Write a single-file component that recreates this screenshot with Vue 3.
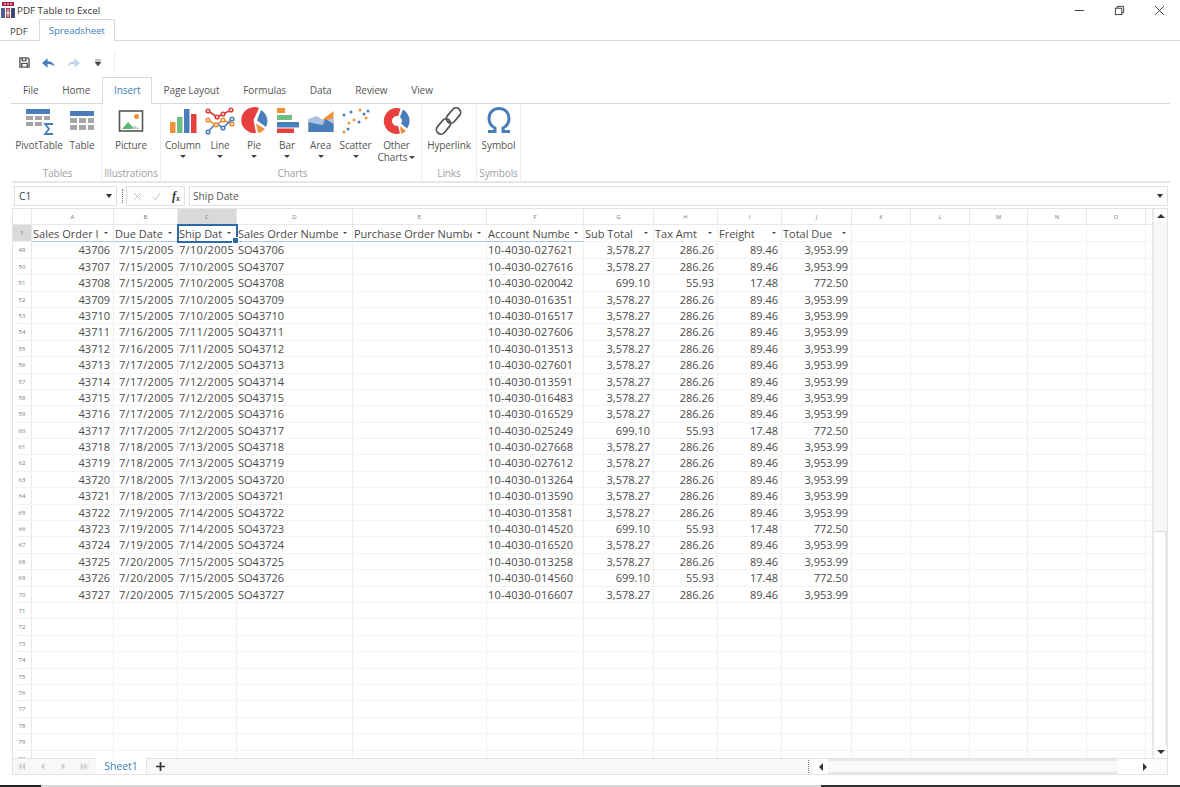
<template>
  <div class="app">
    <!-- barra de titulo -->
    <header class="titlebar">
      <svg class="app-icon" viewBox="0 0 14 16">
        <rect x="1" y="0" width="12" height="4" fill="#a3203f" />
        <path d="M3 2h2M6 2h2M9 2h2" stroke="#fff" stroke-width="1" />
        <rect x="0" y="6" width="4" height="10" fill="#4b5f8c" />
        <rect x="5" y="6" width="4" height="10" fill="#a8404f" />
        <rect x="10" y="6" width="4" height="10" fill="#3d4a6b" />
        <path d="M5 11h4M7 7v8" stroke="#fff" stroke-width="1" />
      </svg>
      <span class="app-name">PDF Table to Excel</span>
      <div class="win-buttons">
        <svg viewBox="0 0 12 12"><path d="M1 6h10" stroke="#333" stroke-width="1" /></svg>
        <svg viewBox="0 0 12 12" fill="none" stroke="#333"><rect x="1.5" y="3.5" width="7" height="7" /><path d="M3.5 3.5v-2h7v7h-2" /></svg>
        <svg viewBox="0 0 12 12"><path d="M1 1l10 10M11 1L1 11" stroke="#333" stroke-width="1" /></svg>
      </div>
    </header>

    <nav class="doc-tabs">
      <span class="doc-tab">PDF</span>
      <span class="doc-tab activo">Spreadsheet</span>
    </nav>

    <!-- barra de acceso rapido -->
    <div class="qat">
      <div class="qat-items">
        <svg viewBox="0 0 12 12" class="qat-icon" fill="none" stroke="#555" stroke-width="1.5">
          <path d="M1 1h8.500L11 2.500V11H1z" />
          <path d="M3.500 1v3h4V1M3 11V7h6v4" />
        </svg>
        <svg viewBox="0 0 14 10" class="qat-arrow"><path d="M0 5L6 0v3c4 0 7 2 8 6-2-2-4-3-8-3v4z" fill="#4a7ebb" /></svg>
        <svg viewBox="0 0 14 10" class="qat-arrow"><path d="M14 5L8 0v3C4 3 1 5 0 9c2-2 4-3 8-3v4z" fill="#c3d5ea" /></svg>
        <svg viewBox="0 0 8 8" class="qat-more"><path d="M1 1h6M1 3h6L4 7z" fill="#444" stroke="#444" stroke-width=".6" /></svg>
      </div>
    </div>

    <nav class="ribbon-tabs">
      <span
        v-for="t in ribbonTabs"
        :key="t"
        class="ribbon-tab"
        :class="{ activo: t === 'Insert' }"
      >{{ t }}</span>
    </nav>

    <!-- cinta -->
    <section class="ribbon">
      <div class="group g-tables">
        <div class="group-items">
          <div class="rb w50">
            <svg viewBox="0 0 30 30" class="ico">
              <rect x="2" y="3" width="24" height="5" fill="#4a7ebb" />
              <path d="M2 10h7v4H2zM11 10h7v4h-7zM20 10h6v4h-6zM2 16h7v4H2zM11 16h7v4h-7z" fill="#a6a6a6" />
              <path d="M29 18h-8l4 5-4 5h8" fill="none" stroke="#4a7ebb" stroke-width="1.8" />
            </svg>
            <span>PivotTable</span>
          </div>
          <div class="rb w36">
            <svg viewBox="0 0 30 30" class="ico">
              <rect x="3" y="5" width="24" height="5" fill="#4a7ebb" />
              <path d="M3 12h7v5H3zM12 12h7v5h-7zM21 12h6v5h-6zM3 19h7v5H3zM12 19h7v5h-7zM21 19h6v5h-6z" fill="#a6a6a6" />
            </svg>
            <span>Table</span>
          </div>
        </div>
        <div class="group-name">Tables</div>
      </div>

      <div class="group g-illus">
        <div class="group-items">
          <div class="rb w58">
            <svg viewBox="0 0 30 30" class="ico">
              <rect x="3.500" y="5" width="23" height="20" fill="#fff" stroke="#555" stroke-width="1.6" />
              <path d="M6 23l6-7 5 5 2-1 4 3z" fill="#5cb878" />
              <path d="M15 23l4-3 4 3z" fill="#b7dcc2" />
              <circle cx="20.500" cy="10.500" r="2.500" fill="#f0913a" />
            </svg>
            <span>Picture</span>
          </div>
        </div>
        <div class="group-name">Illustrations</div>
      </div>

      <div class="group g-charts">
        <div class="group-items">
          <div class="rb w38">
            <svg viewBox="0 0 30 30" class="ico">
              <rect x="2" y="16" width="5.500" height="11" fill="#f0913a" />
              <rect x="9" y="11" width="5.500" height="16" fill="#6fbf85" />
              <rect x="16" y="3" width="5.500" height="24" fill="#4a7ebb" />
              <rect x="23" y="8" width="5.500" height="19" fill="#e8403f" />
            </svg>
            <span>Column</span><i class="caret"></i>
          </div>
          <div class="rb w36">
            <svg viewBox="0 0 30 30" class="ico" fill="none" stroke-width="1.6">
              <path d="M3 5l9 6 6-3 8-4" stroke="#d9413f" />
              <path d="M3 14l8 5 7-5 9 4" stroke="#f0913a" />
              <path d="M3 26l8-9 7 5 9-9" stroke="#4a7ebb" />
              <g fill="#fff">
                <circle cx="3" cy="5" r="1.8" stroke="#d9413f" /><circle cx="12" cy="11" r="1.8" stroke="#d9413f" /><circle cx="18" cy="8" r="1.8" stroke="#d9413f" /><circle cx="26" cy="4" r="1.8" stroke="#d9413f" />
                <circle cx="3" cy="14" r="1.8" stroke="#f0913a" /><circle cx="11" cy="19" r="1.8" stroke="#f0913a" /><circle cx="18" cy="14" r="1.8" stroke="#f0913a" /><circle cx="27" cy="18" r="1.8" stroke="#f0913a" />
                <circle cx="3" cy="26" r="1.8" stroke="#4a7ebb" /><circle cx="18" cy="22" r="1.8" stroke="#4a7ebb" /><circle cx="27" cy="13" r="1.8" stroke="#4a7ebb" />
              </g>
            </svg>
            <span>Line</span><i class="caret"></i>
          </div>
          <div class="rb w32">
            <svg viewBox="0 0 30 30" class="ico">
              <path d="M20 2A13 13 0 1 0 17 27L14.500 14z" fill="#e8403f" />
              <path d="M22 4A13 13 0 0 1 27 21L18 14.500z" fill="#4a7ebb" />
              <path d="M17 17.500L26 23A13 13 0 0 1 19 27z" fill="#f0913a" />
            </svg>
            <span>Pie</span><i class="caret"></i>
          </div>
          <div class="rb w34">
            <svg viewBox="0 0 30 30" class="ico">
              <rect x="5" y="2" width="8" height="5" fill="#f0913a" />
              <rect x="5" y="9" width="15" height="5" fill="#6fbf85" />
              <rect x="5" y="16" width="22" height="5.500" fill="#4a7ebb" />
              <rect x="5" y="22.500" width="17" height="4.500" fill="#e8403f" />
            </svg>
            <span>Bar</span><i class="caret"></i>
          </div>
          <div class="rb w33">
            <svg viewBox="0 0 30 30" class="ico">
              <path d="M2.500 13l8 6 8-7 9-7v21h-25z" fill="#f0913a" />
              <path d="M2.500 13l8-3 8 5 9-3v14h-25z" fill="#a9c3e3" />
              <path d="M2.500 16l8 2 6 1 3-6 8 5v8h-25z" fill="#4a7ebb" />
            </svg>
            <span>Area</span><i class="caret"></i>
          </div>
          <div class="rb w37">
            <svg viewBox="0 0 30 30" class="ico">
              <g fill="#f0913a">
                <circle cx="3" cy="26" r="1.500" /><circle cx="8" cy="17" r="1.500" /><circle cx="13" cy="14" r="1.500" /><circle cx="19" cy="4" r="1.500" /><circle cx="25" cy="12" r="1.500" />
              </g>
              <g fill="#4a7ebb">
                <circle cx="3" cy="9" r="1.500" /><circle cx="7" cy="23" r="1.500" /><circle cx="10" cy="6" r="1.500" /><circle cx="18" cy="16" r="1.500" /><circle cx="23" cy="8" r="1.500" /><circle cx="27" cy="5" r="1.500" />
              </g>
            </svg>
            <span>Scatter</span><i class="caret"></i>
          </div>
          <div class="rb w45">
            <svg viewBox="0 0 30 30" class="ico">
              <path d="M15 2a13 13 0 1 0 3 25.600l-2-7.800a5 5 0 1 1 .3-9.700l2.300-7.600A13 13 0 0 0 15 2z" fill="#e8403f" />
              <path d="M21 3.500a13 13 0 0 1 4 19l-6-5a5 5 0 0 0-1-6.500z" fill="#4a7ebb" />
              <path d="M18 20l6 5a13 13 0 0 1-5 2.700z" fill="#f0913a" />
            </svg>
            <span>Other</span>
            <span class="linea2">Charts<i class="caret-in"></i></span>
          </div>
        </div>
        <div class="group-name">Charts</div>
      </div>

      <div class="group g-links">
        <div class="group-items">
          <div class="rb w54">
            <svg viewBox="0 0 30 30" class="ico" fill="none" stroke="#555" stroke-width="1.8">
              <rect x="15" y="1" width="9" height="17" rx="4.500" transform="rotate(40 19.500 9.500)" />
              <rect x="5" y="12" width="9" height="17" rx="4.500" transform="rotate(40 9.500 20.500)" />
            </svg>
            <span>Hyperlink</span>
          </div>
        </div>
        <div class="group-name">Links</div>
      </div>

      <div class="group g-symbols">
        <div class="group-items">
          <div class="rb w44">
            <svg viewBox="0 0 30 30" class="ico" fill="none" stroke="#4a7ebb" stroke-width="3">
              <path d="M4 25.500h7v-3.500C7 20 5 16 5 12.500C5 6 9.500 2.500 15 2.500S25 6 25 12.500C25 16 23 20 19 22v3.500h7" />
            </svg>
            <span>Symbol</span>
          </div>
        </div>
        <div class="group-name">Symbols</div>
      </div>
    </section>

    <!-- barra de formulas -->
    <div class="formula-bar">
      <div class="name-box">
        <span>C1</span>
        <i class="caret dark"></i>
      </div>
      <span class="grip"></span>
      <div class="fx-box">
        <svg viewBox="0 0 10 10" class="fx-ico"><path d="M1.500 1.500l7 7M8.500 1.500l-7 7" stroke="#bbb" stroke-width="1" /></svg>
        <svg viewBox="0 0 10 10" class="fx-ico"><path d="M1 5.500l3 3 5-7" stroke="#bbb" fill="none" stroke-width="1" /></svg>
        <span class="fx">f<sub>x</sub></span>
      </div>
      <div class="formula-input">
        <span>Ship Date</span>
        <i class="caret dark"></i>
      </div>
    </div>

    <!-- hoja -->
    <section class="sheet">
      <div class="sheet-main">
        <div class="grid-wrap">
          <div class="grid">
            <div class="corner"></div>
            <div
              v-for="c in letras"
              :key="c"
              class="col-head"
              :class="{ sel: c === 'C' }"
            >{{ c }}</div>
            <div class="spacer head"></div>

            <template v-for="fila in filas" :key="fila.n">
              <div class="row-head" :class="{ sel: fila.n === 1 }">{{ fila.n }}</div>
              <div
                v-for="(txt, i) in fila.celdas"
                :key="i"
                class="cell"
                :class="claseCelda(fila, i)"
              >
                <span class="txt">{{ txt }}</span>
                <i v-if="fila.n === 1 && i < 10" class="filtro"></i>
              </div>
              <div class="spacer"></div>
            </template>
          </div>
        </div>
        <div class="vscroll">
          <div class="sb-btn"><i class="tri up"></i></div>
          <div class="v-track"><div class="v-thumb"></div></div>
          <div class="sb-btn"><i class="tri down"></i></div>
        </div>
      </div>

      <footer class="sheet-foot">
        <div class="nav-btns">
          <svg viewBox="0 0 10 8"><path d="M1 0v8M5 0v8L2 4zM9 0v8L6 4z" fill="#ccc" stroke="#ccc" stroke-width=".4" /></svg>
          <svg viewBox="0 0 10 8"><path d="M7 0v8L3 4z" fill="#ccc" /></svg>
          <svg viewBox="0 0 10 8"><path d="M3 0v8l4-4z" fill="#ccc" /></svg>
          <svg viewBox="0 0 10 8"><path d="M9 0v8M5 0v8l3-4zM1 0v8l3-4z" fill="#ccc" stroke="#ccc" stroke-width=".4" /></svg>
        </div>
        <div class="sheet-tab">Sheet1</div>
        <div class="add-sheet">
          <svg viewBox="0 0 9 9"><path d="M4.500 0v9M0 4.500h9" stroke="#333" stroke-width="1.700" /></svg>
        </div>
        <span class="grip foot"></span>
        <div class="hscroll">
          <div class="sb-btn h"><i class="tri left"></i></div>
          <div class="h-thumb"></div>
          <div class="h-rest"></div>
          <div class="sb-btn h"><i class="tri right"></i></div>
        </div>
        <div class="foot-corner"></div>
      </footer>
    </section>

    <div class="desktop-line">
      <span class="dl-a"></span><span class="dl-b"></span><span class="dl-c"></span>
    </div>
  </div>
</template>

<script setup>
const ribbonTabs = ["File", "Home", "Insert", "Page Layout", "Formulas", "Data", "Review", "View"];
const letras = "ABCDEFGHIJKLMNO".split("");

const cabecera = [
  "Sales Order I",
  "Due Date",
  "Ship Dat",
  "Sales Order Numbe",
  "Purchase Order Numbe",
  "Account Numbe",
  "Sub Total",
  "Tax Amt",
  "Freight",
  "Total Due",
  "", "", "", "", "",
];

// [id, due, ship, cuenta, tipo de importe]
const datos = [
  [43706, "7/15/2005", "7/10/2005", "027621", 0],
  [43707, "7/15/2005", "7/10/2005", "027616", 0],
  [43708, "7/15/2005", "7/10/2005", "020042", 1],
  [43709, "7/15/2005", "7/10/2005", "016351", 0],
  [43710, "7/15/2005", "7/10/2005", "016517", 0],
  [43711, "7/16/2005", "7/11/2005", "027606", 0],
  [43712, "7/16/2005", "7/11/2005", "013513", 0],
  [43713, "7/17/2005", "7/12/2005", "027601", 0],
  [43714, "7/17/2005", "7/12/2005", "013591", 0],
  [43715, "7/17/2005", "7/12/2005", "016483", 0],
  [43716, "7/17/2005", "7/12/2005", "016529", 0],
  [43717, "7/17/2005", "7/12/2005", "025249", 1],
  [43718, "7/18/2005", "7/13/2005", "027668", 0],
  [43719, "7/18/2005", "7/13/2005", "027612", 0],
  [43720, "7/18/2005", "7/13/2005", "013264", 0],
  [43721, "7/18/2005", "7/13/2005", "013590", 0],
  [43722, "7/19/2005", "7/14/2005", "013581", 0],
  [43723, "7/19/2005", "7/14/2005", "014520", 1],
  [43724, "7/19/2005", "7/14/2005", "016520", 0],
  [43725, "7/20/2005", "7/15/2005", "013258", 0],
  [43726, "7/20/2005", "7/15/2005", "014560", 1],
  [43727, "7/20/2005", "7/15/2005", "016607", 0],
];

const importes = [
  ["3,578.27", "286.26", "89.46", "3,953.99"],
  ["699.10", "55.93", "17.48", "772.50"],
];

const filas = [{ n: 1, celdas: cabecera }];
datos.forEach((d, i) => {
  filas.push({
    n: 49 + i,
    celdas: [
      String(d[0]), d[1], d[2], "SO" + d[0], "", "10-4030-" + d[3],
      ...importes[d[4]],
      "", "", "", "", "",
    ],
  });
});
for (let n = 71; n <= 80; n++) {
  filas.push({ n, celdas: Array(15).fill("") });
}

const derecha = [0, 1, 2, 6, 7, 8, 9];

function claseCelda(fila, i) {
  if (fila.n === 1) {
    return { cabecera: true, enTabla: i < 6, activa: i === 2 };
  }
  return {
    der: derecha.includes(i),
    fecha: i === 1 || i === 2,
    cuenta: i === 5,
  };
}
</script>

<style scoped>
.app {
  width: 1180px;
  height: 787px;
  overflow: hidden;
  background: #fff;
  font-family: "Open Sans", "Noto Sans", sans-serif;
  font-size: 11px;
  color: #444;
  display: flex;
  flex-direction: column;
}

/* Titulo */
.titlebar {
  height: 20px;
  flex: none;
  display: flex;
  align-items: center;
  padding-left: 1px;
}
.app-icon {
  width: 14px;
  height: 16px;
}
.app-name {
  margin-left: 2px;
  font-size: 9.8px;
  color: #333;
}
.win-buttons {
  margin-left: auto;
  display: flex;
  gap: 29px;
  padding-right: 15px;
}
.win-buttons svg {
  width: 11px;
  height: 11px;
}

/* Tabs de documento */
.doc-tabs {
  height: 21px;
  flex: none;
  box-sizing: border-box;
  display: flex;
  align-items: flex-end;
  border-bottom: 1px solid #d9d9d9;
}
.doc-tab {
  line-height: 23px;
  height: 20px;
  padding: 0 9px 0 10px;
  font-size: 9.6px;
  color: #444;
}
.doc-tab.activo {
  height: 22px;
  margin-bottom: -1px;
  box-sizing: border-box;
  line-height: 22px;
  padding: 0 9px;
  margin-left: 2px;
  background: #fff;
  border: 1px solid #d9d9d9;
  border-bottom: none;
  color: #3c7fb8;
}

/* QAT */
.qat {
  height: 36px;
  flex: none;
  padding: 10px 0 0 12px;
  box-sizing: border-box;
}
.qat-items {
  width: 95px;
  height: 23px;
  display: flex;
  align-items: center;
  border-right: 1px solid #ececec;
  padding-left: 7px;
}
.qat-icon {
  width: 11px;
  height: 11px;
}
.qat-arrow {
  width: 13px;
  height: 10px;
  margin-left: 12px;
}
.qat-more {
  width: 8px;
  height: 8px;
  margin-left: 14px;
}

/* Tabs de cinta */
.ribbon-tabs {
  height: 27px;
  flex: none;
  box-sizing: border-box;
  margin: 0 0 0 11px;
  width: 1159px;
  display: flex;
  align-items: flex-end;
  border-bottom: 1px solid #d9d9d9;
}
.ribbon-tab {
  height: 26px;
  line-height: 26px;
  padding: 0 11.8px 0 12px;
  font-size: 10px;
  letter-spacing: -0.08px;
  color: #555;
  box-sizing: border-box;
}
.ribbon-tab.activo {
  height: 27px;
  line-height: 24px;
  margin-bottom: -1px;
  padding: 0 10px 0 11px;
  background: #fff;
  border: 1px solid #d9d9d9;
  border-bottom: none;
  color: #3c7fb8;
}

/* Cinta */
.ribbon {
  height: 79px;
  flex: none;
  margin-left: 12px;
  width: 1158px;
  display: flex;
  border-bottom: 2px solid #e6e6e6;
  box-sizing: border-box;
}
.group {
  display: flex;
  flex-direction: column;
  border-right: 1px solid #ececec;
  height: 76px;
  box-sizing: border-box;
}
.g-tables { width: 90px; padding-left: 2px; }
.g-illus { width: 59px; }
.g-charts { width: 261px; padding-left: 3px; }
.g-links { width: 55px; }
.g-symbols { width: 44px; }
.group-items {
  display: flex;
  height: 61px;
  flex: none;
}
.group-name {
  height: 15px;
  line-height: 16px;
  text-align: center;
  color: #a0a0a0;
  font-size: 10px;
  letter-spacing: -0.1px;
  white-space: nowrap;
}
.rb {
  display: flex;
  flex-direction: column;
  align-items: center;
  padding-top: 2px;
  font-size: 10px;
  letter-spacing: -0.1px;
  color: #555;
  line-height: 12px;
  white-space: nowrap;
}
.rb > span {
  display: block;
}
.ico {
  width: 30px;
  height: 30px;
  margin-bottom: 3px;
  flex: none;
}
.w50 { width: 50px; }
.w36 { width: 36px; }
.w58 { width: 58px; }
.w38 { width: 38px; }
.w32 { width: 32px; }
.w34 { width: 34px; }
.w33 { width: 33px; }
.w37 { width: 37px; }
.w45 { width: 45px; }
.w54 { width: 54px; }
.w44 { width: 44px; }
.caret {
  width: 0;
  height: 0;
  margin-top: 4px;
  border-left: 3px solid transparent;
  border-right: 3px solid transparent;
  border-top: 3px solid #444;
}
.caret-in {
  display: inline-block;
  width: 0;
  height: 0;
  margin-left: 2px;
  vertical-align: 2px;
  border-left: 3px solid transparent;
  border-right: 3px solid transparent;
  border-top: 3px solid #444;
}

/* Barra de formulas */
.formula-bar {
  height: 20px;
  flex: none;
  margin: 3px 12px 0 14px;
  display: flex;
  align-items: stretch;
  font-size: 10.2px;
}
.name-box {
  width: 103px;
  border: 1px solid #e0e0e0;
  box-sizing: border-box;
  display: flex;
  align-items: center;
  justify-content: space-between;
  padding: 0 4px;
}
.caret.dark {
  margin: 0;
  border-left-width: 3.5px;
  border-right-width: 3.5px;
  border-top-width: 4px;
  border-top-color: #333;
}
.grip {
  width: 0;
  margin: 3px 3px 3px 5px;
  border-left: 1px dotted #777;
}
.fx-box {
  width: 59px;
  margin-left: 0;
  border: 1px solid #e0e0e0;
  box-sizing: border-box;
  display: flex;
  align-items: center;
  padding-left: 6px;
}
.fx-ico {
  width: 9px;
  height: 9px;
  margin-right: 10px;
}
.fx {
  font-family: "Liberation Serif", serif;
  font-style: italic;
  font-weight: 700;
  font-size: 12px;
  color: #333;
  line-height: 1;
  margin-left: 1px;
}
.fx sub {
  font-size: 8px;
  vertical-align: -1px;
  line-height: 0;
}
.formula-input {
  flex: 1;
  margin-left: 4px;
  border: 1px solid #e0e0e0;
  box-sizing: border-box;
  display: flex;
  align-items: center;
  justify-content: space-between;
  padding: 0 4px 0 3px;
  color: #555;
}

/* Hoja */
.sheet {
  margin: 2px 12px 0 12px;
  height: 567px;
  flex: none;
  border: 1px solid #e3e3e3;
  box-sizing: border-box;
  display: flex;
  flex-direction: column;
}
.sheet-main {
  flex: 1;
  min-height: 0;
  display: flex;
}
.grid-wrap {
  flex: 1;
  min-width: 0;
  overflow: hidden;
}
.grid {
  display: grid;
  grid-template-columns: 19px 82px 64px 59px 116px 134px 97px 70px 64px 64px 70px 59px 59px 58px 59px 59px 1fr;
  grid-template-rows: 16px 17.4px repeat(31, 16.4px);
}
.col-head {
  font-size: 6px;
  line-height: 16px;
  text-align: center;
  color: #777;
  border-right: 1px solid #e8e8e8;
  border-bottom: 1px solid #e8e8e8;
  box-sizing: border-box;
  background: #fff;
}
.corner {
  background: #fff;
  border-right: 1px solid #e8e8e8;
  border-bottom: 1px solid #e8e8e8;
}
.col-head.sel {
  background: #d9d9d9;
}
.row-head {
  font-size: 6px;
  line-height: 16px;
  text-align: center;
  color: #777;
  background: #fff;
  border-right: 1px solid #e8e8e8;
  border-bottom: 1px solid #f2f2f2;
  box-sizing: border-box;
}
.row-head.sel {
  background: #d9d9d9;
}
.cell {
  position: relative;
  font-size: 11px;
  line-height: 16px;
  color: #4a4a4a;
  border-right: 1px solid #efefef;
  border-bottom: 1px solid #f3f3f3;
  box-sizing: border-box;
  padding: 0 3px 0 1px;
  white-space: nowrap;
  overflow: hidden;
}
.cell.der {
  text-align: right;
}
.cell.fecha {
  letter-spacing: 0.33px;
}
.cell.cuenta {
  letter-spacing: 0.2px;
}
.cell.cabecera {
  overflow: visible;
  line-height: 17px;
}
.cell.cabecera .txt {
  display: block;
  overflow: hidden;
  margin-right: 11px;
}
.cell.enTabla {
  border-bottom: 1px solid #a9cce3;
}
.cell.activa {
  outline: 2px solid #2c6aa6;
  outline-offset: -1px;
  z-index: 2;
}
.cell.activa::after {
  content: "";
  position: absolute;
  right: -3px;
  bottom: -3px;
  width: 5px;
  height: 5px;
  background: #2c6aa6;
  border: 1px solid #fff;
}
.filtro {
  position: absolute;
  right: 5px;
  top: 7px;
  width: 0;
  height: 0;
  border-left: 2px solid transparent;
  border-right: 2px solid transparent;
  border-top: 2.5px solid #444;
}
.spacer {
  border-bottom: 1px solid #f3f3f3;
}
.spacer.head {
  border-bottom-color: #e8e8e8;
}

/* Scrollbars */
.vscroll {
  width: 15px;
  flex: none;
  display: flex;
  flex-direction: column;
  background: #f7f7f7;
  border-left: 2px solid #e8e8e8;
  box-sizing: border-box;
}
.v-track {
  flex: 1;
  position: relative;
}
.v-thumb {
  position: absolute;
  left: 0;
  right: 0;
  top: 309px;
  bottom: 0;
  background: #fff;
  border-top: 1px solid #dcdcdc;
  border-right: 2px solid #e8e8e8;
}
.sb-btn {
  height: 13px;
  background: #fff;
  display: flex;
  align-items: center;
  justify-content: center;
}
.tri {
  width: 0;
  height: 0;
  border: 4px solid transparent;
}
.tri.up {
  border-top: none;
  border-bottom: 4px solid #333;
}
.tri.down {
  border-bottom: none;
  border-top: 4px solid #333;
}
.tri.left {
  border-left: none;
  border-right: 4px solid #333;
}
.tri.right {
  border-right: none;
  border-left: 4px solid #333;
}

.sheet-foot {
  height: 15px;
  flex: none;
  display: flex;
  align-items: stretch;
  border-top: 1px solid #e3e3e3;
  background: #f8f8f8;
}
.nav-btns {
  width: 83px;
  flex: none;
  display: flex;
  align-items: center;
  gap: 12px;
  padding-left: 4px;
  box-sizing: border-box;
}
.nav-btns svg {
  width: 9px;
  height: 7px;
}
.sheet-tab {
  width: 50px;
  flex: none;
  margin-top: -1px;
  background: #fff;
  border-right: 1px solid #e3e3e3;
  text-align: center;
  color: #3c7fb8;
  line-height: 16px;
  font-size: 10.5px;
}
.add-sheet {
  width: 9px;
  flex: none;
  padding-left: 9px;
  display: flex;
  align-items: center;
}
.add-sheet svg {
  width: 9px;
  height: 9px;
}
.grip.foot {
  margin: 1px 0 1px 643px;
}
.hscroll {
  width: 338px;
  flex: none;
  margin-left: 5px;
  display: flex;
}
.sb-btn.h {
  width: 14px;
  height: auto;
  flex: none;
  background: #fff;
}
.h-thumb {
  flex: 1;
  background: #f9f9f9;
  border-top: 2px solid #e8e8e8;
  border-bottom: 2px solid #e8e8e8;
}
.h-rest {
  width: 20px;
  background: #fff;
}
.foot-corner {
  flex: 1;
  background: #fbfbfb;
}

.desktop-line {
  margin-top: auto;
  height: 2px;
  flex: none;
  display: flex;
}
.dl-a {
  width: 41px;
  background: #222;
}
.dl-b {
  width: 780px;
  background: #d8d8d8;
}
.dl-c {
  flex: 1;
  background: #333;
}
</style>
